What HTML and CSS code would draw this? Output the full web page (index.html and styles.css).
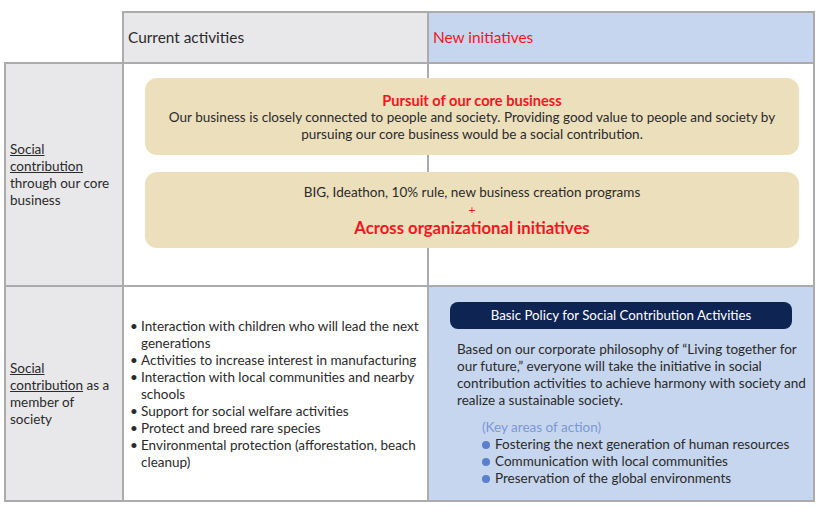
FILE: index.html
```html
<!DOCTYPE html>
<html lang="en">
<head>
<meta charset="utf-8">
<title>Social contribution matrix</title>
<link rel="stylesheet" href="styles.css">
</head>
<body>
<div class="page">
  <div class="matrix">
    <div class="corner"></div>
    <div class="head head-current">Current activities</div>
    <div class="head head-new">New initiatives</div>

    <div class="label"><p><span class="u">Social</span> <span class="u">contribution</span> through our core business</p></div>
    <div class="core">
      <div class="box box-first">
        <p class="box-title">Pursuit of our core business</p>
        <p>Our business is closely connected to people and society. Providing good value to people and society by pursuing our core business would be a social contribution.</p>
      </div>
      <div class="box box-second">
        <p>BIG, Ideathon, 10% rule, new business creation programs</p>
        <p class="plus">+</p>
        <p class="box-big">Across organizational initiatives</p>
      </div>
    </div>

    <div class="label"><p><span class="u">Social</span> <span class="u">contribution</span> as a member of society</p></div>
    <div class="cell list-cell">
      <ul class="activities">
        <li>Interaction with children who will lead the next generations</li>
        <li>Activities to increase interest in manufacturing</li>
        <li>Interaction with local communities and nearby schools</li>
        <li>Support for social welfare activities</li>
        <li>Protect and breed rare species</li>
        <li>Environmental protection (afforestation, beach cleanup)</li>
      </ul>
    </div>
    <div class="cell policy">
      <div class="pill">Basic Policy for Social Contribution Activities</div>
      <p class="policy-text">Based on our corporate philosophy of “Living together for our future,” everyone will take the initiative in social contribution activities to achieve harmony with society and realize a sustainable society.</p>
      <div class="key">
        <p class="key-title">(Key areas of action)</p>
        <ul class="key-list">
          <li>Fostering the next generation of human resources</li>
          <li>Communication with local communities</li>
          <li>Preservation of the global environments</li>
        </ul>
      </div>
    </div>
  </div>
</div>
</body>
</html>
```

FILE: styles.css
```css
* { box-sizing: border-box; }
html, body { margin: 0; padding: 0; background: #fff; }
body {
  font-family: Lato, "Open Sans", "Liberation Sans", sans-serif;
  font-size: 13.5px;
  line-height: 17px;
  color: #2a2a2a;
}
p { margin: 0; }
ul { margin: 0; padding: 0; list-style: none; }

.page { padding: 11px 0 0 4px; }

.matrix {
  display: grid;
  grid-template-columns: 120px 305px 386px;
  grid-template-rows: 53px 223px 215px;
}

.corner {
  border-right: 2px solid #ababab;
  border-bottom: 2px solid #ababab;
}

.head {
  border-top: 2px solid #ababab;
  border-right: 2px solid #ababab;
  border-bottom: 2px solid #ababab;
  display: flex;
  align-items: center;
  padding: 0 4px;
  font-size: 15.4px;
}
.head-current { background: #e8e8ea; }
.head-new { background: #c6d6ee; color: #f5141e; }

.label {
  background: #e8e8ea;
  border-left: 2px solid #ababab;
  border-right: 2px solid #ababab;
  border-bottom: 2px solid #ababab;
  display: flex;
  align-items: center;
  padding: 1px 8px 0 4px;
}
.u { text-decoration: underline; text-decoration-thickness: 1px; text-underline-offset: 1px; }

.core {
  grid-column: 2 / 4;
  border-right: 2px solid #ababab;
  border-bottom: 2px solid #ababab;
  background: linear-gradient(to right, transparent 303px, #ababab 303px, #ababab 305px, transparent 305px);
  padding: 14px 14px 0 21px;
  display: flex;
  flex-direction: column;
  gap: 17px;
}
.box {
  background: #ecdfbc;
  border-radius: 12px;
  text-align: center;
}
.box-first { height: 77px; padding: 14px 12px 0; }
.box-second { height: 76px; padding: 11px 12px 0; line-height: 18px; }
.box-title { color: #f5141e; font-weight: 700; font-size: 14.6px; }
.plus { color: #f5141e; font-size: 12px; }
.box-big { color: #f5141e; font-weight: 700; font-size: 16.7px; }

.cell {
  border-right: 2px solid #ababab;
  border-bottom: 2px solid #ababab;
}
.list-cell {
  display: flex;
  align-items: center;
  padding: 2px 2px 0 6px;
}
.activities li { display: flex; }
.activities li::before { content: "•"; flex: 0 0 11px; }

.policy {
  background: #c6d6ee;
  padding: 15px 4px 0 21px;
}
.pill {
  height: 27px;
  margin-right: 17px;
  background: #0e2452;
  color: #fff;
  border-radius: 8px;
  display: flex;
  align-items: center;
  justify-content: center;
  font-size: 13.3px;
}
.policy-text { margin: 12px 0 0 7px; }
.key { margin: 10px 0 0 32px; }
.key-title { color: #7b98d6; }
.key-list li { display: flex; align-items: center; }
.key-list li::before {
  content: "";
  width: 8px;
  height: 8px;
  border-radius: 50%;
  background: #5b7fcc;
  margin: 0 5px 0 0;
}
```
